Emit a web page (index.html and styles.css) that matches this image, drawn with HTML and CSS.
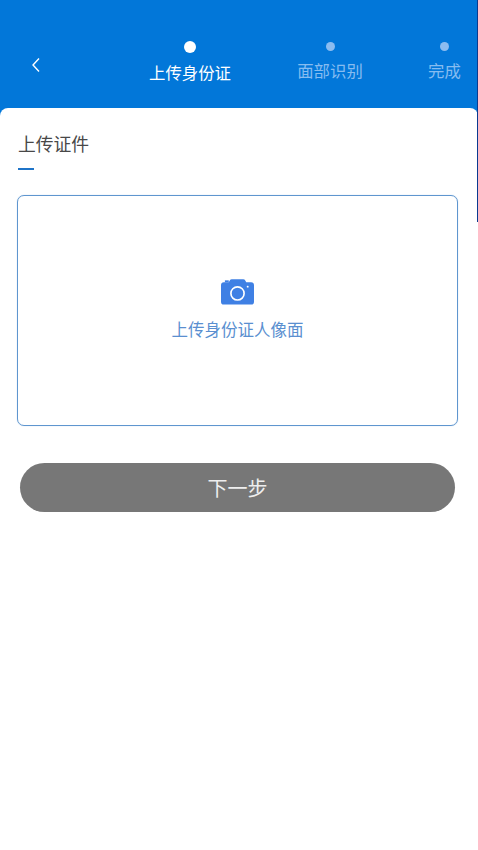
FILE: index.html
```html
<!DOCTYPE html>
<html lang="zh-CN">
<head>
    <meta charset="UTF-8">
    <meta name="viewport" content="width=device-width, initial-scale=1.0">
    <title>上传证件</title>
    <link rel="stylesheet" href="styles.css">
</head>
<body>
    <div class="page">
        <header class="top">
            <svg class="back" width="10" height="16" viewBox="0 0 10 16">
                <path d="M8 1.5 L2 8 L8 14.5" fill="none" stroke="#fff" stroke-width="1.4"/>
            </svg>
            <div class="step step-one">
                <span class="dot dot-on"></span>
                <span class="step-name name-on">上传身份证</span>
            </div>
            <div class="step step-two">
                <span class="dot"></span>
                <span class="step-name">面部识别</span>
            </div>
            <div class="step step-three">
                <span class="dot"></span>
                <span class="step-name">完成</span>
            </div>
        </header>

        <main class="card">
            <h2 class="title">上传证件</h2>
            <div class="title-line"></div>

            <div class="upload">
                <svg class="camera" width="33" height="27" viewBox="0 0 34 27">
                    <path fill="#3f80e4" d="M3 4 H8 L9.5 1.5 Q10 .8 11 .8 H23 Q24 .8 24.5 1.5 L26 4 H31 Q34 4 34 7 V24 Q34 27 31 27 H3 Q0 27 0 24 V7 Q0 4 3 4 Z"/>
                    <path fill="#3f80e4" d="M4 2 H8 V4 H4 Z"/>
                    <circle cx="17" cy="15.5" r="6.8" fill="none" stroke="#fff" stroke-width="1.7"/>
                    <circle cx="27.5" cy="8.5" r="1" fill="#fff"/>
                </svg>
                <span class="upload-text">上传身份证人像面</span>
            </div>

            <button class="next" type="button">下一步</button>
        </main>

        <div class="edge"></div>
    </div>
</body>
</html>
```

FILE: styles.css
```css
html, body {
    margin: 0;
    padding: 0;
    background: #ffffff;
}
.page {
    position: relative;
    width: 478px;
    height: 850px;
    overflow: hidden;
    background: #0277d9;
    font-family: "Noto Sans CJK SC", "Noto Sans", sans-serif;
}
.top {
    display: flex;
    height: 108px;
    box-sizing: border-box;
    padding-top: 41px;
}
.back {
    margin: 16px 0 0 31px;
}
.step {
    display: flex;
    flex-direction: column;
    align-items: center;
}
.step-one {
    margin-left: 108px;
    width: 82px;
}
.step-two {
    margin-left: 66px;
    width: 66px;
}
.step-three {
    margin-left: 65px;
    width: 33px;
}
.dot {
    width: 9px;
    height: 9px;
    margin-top: 1px;
    border-radius: 50%;
    background: #8cbcf0;
}
.dot-on {
    width: 12px;
    height: 12px;
    margin-top: 0;
    background: #ffffff;
}
.step-name {
    margin-top: 7px;
    font-size: 16.4px;
    line-height: 24px;
    color: #86bcf0;
    white-space: nowrap;
}
.name-on {
    margin-top: 7px;
    color: #ffffff;
}
.card {
    height: 742px;
    box-sizing: border-box;
    padding: 23px 20px 0 17px;
    background: #ffffff;
    border-radius: 8px 8px 0 0;
}
.title {
    margin: 0 0 0 1px;
    font-size: 17.8px;
    line-height: 25px;
    font-weight: 400;
    color: #484848;
}
.title-line {
    width: 16px;
    height: 2px;
    margin: 12px 0 0 1px;
    background: #1f74c8;
}
.upload {
    display: flex;
    flex-direction: column;
    align-items: center;
    height: 231px;
    margin-top: 25px;
    box-sizing: border-box;
    padding-top: 82px;
    border: 1px solid #5f96cf;
    border-radius: 7px;
    box-shadow: 0 0 1px #9fc2e6;
}
.upload-text {
    margin-top: 12px;
    font-size: 16.5px;
    line-height: 24px;
    color: #5a8fd0;
}
.next {
    display: block;
    width: 435px;
    height: 49px;
    margin: 37px 0 0 3px;
    border: none;
    border-radius: 25px;
    background: #777777;
    color: #eeeeee;
    font-family: inherit;
    font-size: 20px;
}
.edge {
    position: absolute;
    top: 0;
    right: 0;
    width: 1px;
    height: 222px;
    background: #0a3a90;
}
```
